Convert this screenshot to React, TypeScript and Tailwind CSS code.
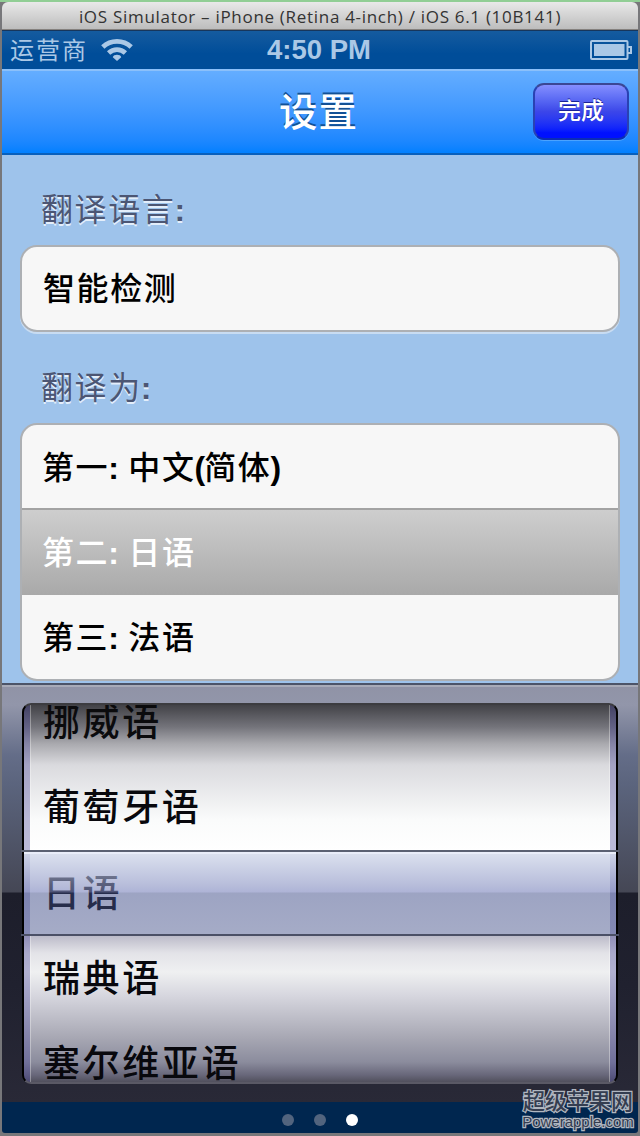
import React from 'react'

const targets = ["第一: 中文(简体)", "第二: 日语", "第三: 法语"]
const languages = ["挪威语", "葡萄牙语", "日语", "瑞典语", "塞尔维亚语"]

// Latin punctuation is set bold next to the medium Chinese text
function Mixed({ text }: { text: string }) {
  return (
    <>
      {text.split(/([:()])/).map((part, i) =>
        /^[:()]$/.test(part)
          ? <span key={i} className="font-bold -ml-px tracking-[-1px]">{part}</span>
          : <span key={i}>{part}</span>
      )}
    </>
  )
}

function StatusBar() {
  return (
    <div className="grid grid-cols-3 items-center h-[39px] shrink-0 pl-2 pr-1.5 bg-linear-to-b from-[#155b9f] to-[#004d99] to-60% border-t border-[#17365c] text-[#abc8e6]">
      <div className="flex items-center gap-[13px]">
        <span className="text-[24px] leading-none tracking-[2px] pt-px">运营商</span>
        <svg width="32" height="24" viewBox="0 0 32 24" fill="none" stroke="currentColor" strokeWidth="4.8">
          <path d="M1.8 9C9.8 1.6 22.2 1.6 30.2 9" />
          <path d="M7.6 14.9C12.5 10.4 19.5 10.4 24.4 14.9" />
          <path d="M16 23L11.8 19.2C12.6 16 19.4 16 20.2 19.2Z" fill="currentColor" stroke="none" />
        </svg>
      </div>
      <span className="text-center text-[27.5px] leading-none font-bold whitespace-nowrap -ml-[4px]">4:50 PM</span>
      <svg className="justify-self-end" width="43" height="20" viewBox="0 0 43 20" fill="none" stroke="currentColor" strokeWidth="2">
        <rect x="2" y="1" width="36.5" height="18" rx="1" />
        <rect x="5" y="4" width="30.5" height="12" fill="currentColor" stroke="none" />
        <path d="M38.5 7H42V13H38.5" />
      </svg>
    </div>
  )
}

function NavBar() {
  return (
    <div className="grid grid-cols-[1fr_auto_1fr] items-center h-[86px] shrink-0 pr-[9px] border-t-2 border-b-2 border-t-[#8bc0fa] border-b-[#0860bd] bg-linear-to-b from-[#64adff] to-[#0080ff]">
      <span />
      <h1 className="pl-1.5 pt-0.5 text-[38.5px] leading-none font-medium text-white tracking-[1px] [text-shadow:0_-2px_0_#125196]">设置</h1>
      <button className="justify-self-end w-[96px] h-[57px] -mt-px rounded-[11px] border-2 border-t-[#3b4794] border-x-[#2942b3] border-b-[#0a2cb5] bg-linear-to-b from-[#858eff] via-[#3c46e9] via-50% to-[#0010ff] to-90% text-white text-[23px] font-medium leading-none shadow-[0_1px_0_#4aa3ff] [text-shadow:0_-1px_0_#1b2396]">
        完成
      </button>
    </div>
  )
}

function Settings() {
  return (
    <div className="h-[528px] shrink-0 overflow-hidden bg-[#9ec3eb] px-[18px]">
      <h2 className="h-[90px] pt-[35px] pl-[21px] text-[32px] leading-[40px] tracking-[1.6px] text-[#4c5674] [text-shadow:0_2px_0_#e3eefb]">
        <Mixed text="翻译语言:" />
      </h2>
      <div className="flex items-center h-[87px] pl-[21px] pt-px rounded-[17px] border-2 border-[#adb0b4] bg-[#f7f7f7] text-[32px] leading-none font-medium tracking-[1.6px] shadow-[0_2px_0_#c8dcf2]">
        智能检测
      </div>
      <h2 className="h-[91px] pt-[36px] pl-[21px] text-[32px] leading-[40px] tracking-[1.6px] text-[#4c5674] [text-shadow:0_2px_0_#e3eefb]">
        <Mixed text="翻译为:" />
      </h2>
      <ul className="h-[258px] overflow-hidden rounded-[17px] border-2 border-[#adb0b4] bg-[#f7f7f7] text-[32px] leading-none font-medium tracking-[1.6px]">
        {targets.map((target, i) => (
          <li
            key={target}
            className={i === 1
              ? "flex items-center h-[87px] pl-5 border-t-2 border-[#a3a3a3] bg-linear-to-b from-[#cecece] to-[#a9a9a9] text-white"
              : "flex items-center h-[83px] pl-5 pt-0.5 text-black"}
          >
            <span><Mixed text={target} /></span>
          </li>
        ))}
      </ul>
    </div>
  )
}

function Picker() {
  return (
    <div className="h-[419px] shrink-0 px-5 pt-[18px] border-t-2 border-[#4c5468] shadow-[inset_0_2px_0_#a8abb8] bg-[linear-gradient(to_bottom,#9093a6_0px,#9296aa_20px,#646d88_70px,#5b647d_100px,#454755_207px,#1d1e2b_208px,#20212f_300px,#292937_417px)]">
      <div className="relative h-[381px]">
        <div className="h-full overflow-hidden rounded-[9px] border-2 border-t-[#3c3c40] border-x-black border-b-[#5a5965] bg-[linear-gradient(to_bottom,#424247_0px,#74747b_22px,#aaaaaf_39px,#dadade_60px,#fafbfb_115px,#ffffff_147px,#ffffff_230px,#bcbbc9_231px,#e3e3e8_248px,#eff0f1_267px,#d7d7df_290px,#a7a7b3_333px,#8b8c9d_357px,#68677a_370px,#4a4954_379px)]">
          <div className="h-full border-x-[6px] border-[#4340955c] shadow-[inset_1px_0_0_#ffffff55,inset_-1px_0_0_#ffffff55]">
            <ul className="pl-[13px]">
              {languages.map((language, i) => (
                <li
                  key={language}
                  className={i === 0
                    ? "flex items-center h-[61px] pb-[25px] text-[37px] leading-none font-medium tracking-[2.6px] text-[#0b0b0d]"
                    : i === 2
                      ? "flex items-center h-[86px] text-[37px] leading-none font-medium tracking-[2.6px] text-black"
                      : "flex items-center h-[85px] text-[37px] leading-none font-medium tracking-[2.6px] text-[#08080d]"}
                >
                  {language}
                </li>
              ))}
            </ul>
          </div>
        </div>
        {/* glass bar over the selected row */}
        <div className="absolute -inset-x-px top-[147px] h-[86px] px-[3px] border-y-2 border-t-[#5b6172] border-b-[#4b5066]">
          <div className="h-full border-t-2 border-[#e9edf9] bg-[linear-gradient(to_bottom,#d1d8eacc_0px,#8f98c6a0_30px,#7e87bea0_38px,#47548e88_39px,#4d598f80_82px)]" />
        </div>
      </div>
    </div>
  )
}

export default function App() {
  return (
    <div className="relative w-[640px] h-[1136px] overflow-hidden bg-[#77777a] border-t-2 border-[#91ce95] font-['Liberation_Sans','Noto_Sans_CJK_SC',sans-serif]">
      <div className="mx-auto w-[636px] h-[1131px] overflow-hidden rounded-t-[6px] rounded-b-[3px] flex flex-col">
        <div className="h-[28px] shrink-0 flex items-center justify-center pt-0.5 bg-linear-to-b from-[#e9e9e9] to-[#bdbdbd] border-b border-[#85817e] text-[#333] font-['Open_Sans','Noto_Sans',sans-serif] text-[17px] tracking-[0.7px] leading-none whitespace-nowrap">
          iOS Simulator – iPhone (Retina 4-inch) / iOS 6.1 (10B141)
        </div>
        <StatusBar />
        <NavBar />
        <Settings />
        <Picker />
        <div className="flex items-center justify-center gap-5 flex-1 bg-[#00264f] pt-1">
          <span className="size-3 rounded-full bg-[#52647e]" />
          <span className="size-3 rounded-full bg-[#52647e]" />
          <span className="size-3 rounded-full bg-white" />
        </div>
      </div>
      <div className="absolute right-[6px] bottom-[6px] flex flex-col items-center w-[112px] text-[#343d50] [-webkit-text-stroke:2.5px_#b0b6c0] [paint-order:stroke_fill]">
        <p className="text-[22px] leading-[22px] font-medium whitespace-nowrap">超级苹果网</p>
        <p className="font-['Liberation_Sans',sans-serif] text-[15px] leading-[17px] whitespace-nowrap">Powerapple.com</p>
      </div>
    </div>
  )
}
